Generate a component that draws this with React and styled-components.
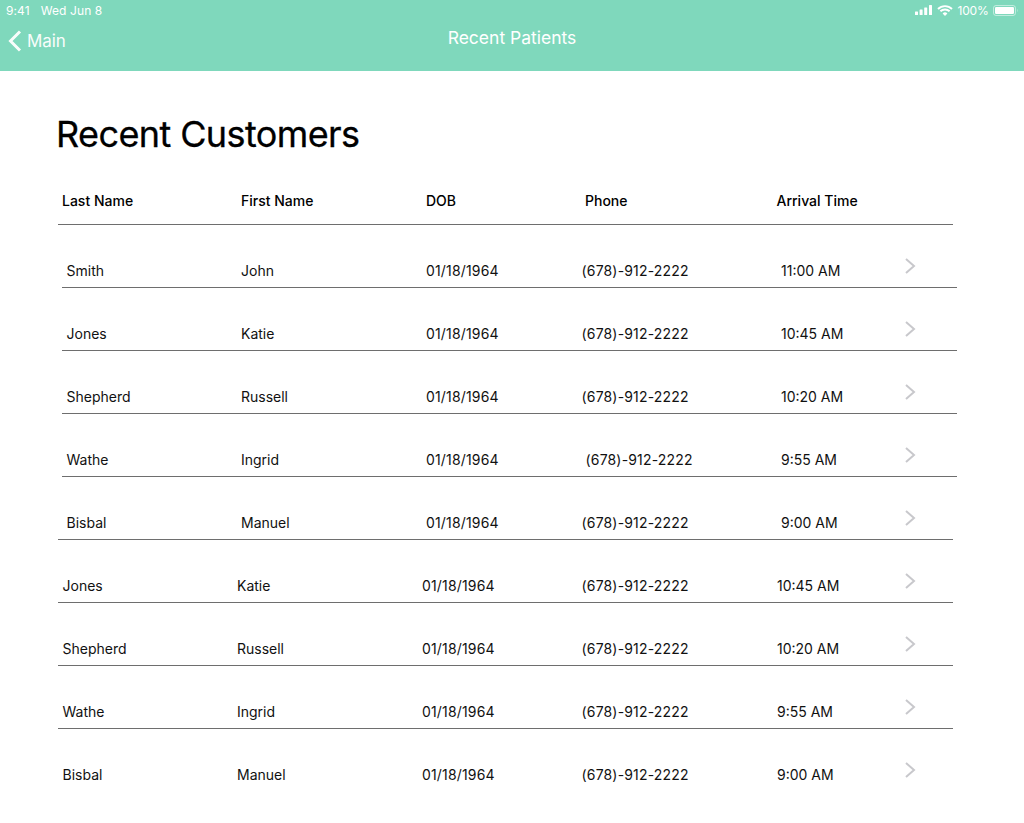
import React from "react";
import styled, { createGlobalStyle } from "styled-components";

const Global = createGlobalStyle`
  html, body { margin: 0; padding: 0; background: #fff; }
  body { font-family: Inter, "Liberation Sans", sans-serif; color: #000; }
`;

const Page = styled.div`
  width: 1024px;
  height: 823px;
  overflow: hidden;
`;
const NavBar = styled.header`
  height: 71px;
  background: #7fd8bc;
  color: #fff;
  display: flex;
  flex-direction: column;
`;
const StatusBar = styled.div`
  height: 20px;
  padding: 0 6px 0 6px;
  display: flex;
  align-items: center;
  justify-content: space-between;
  font-size: 12px;
  letter-spacing: 0.1px;
`;
const StatusGroup = styled.div`
  display: flex;
  align-items: center;
  gap: ${(p) => p.$gap}px;
`;
const Percent = styled.span`
  letter-spacing: -0.2px;
`;
const NavRow = styled.div`
  position: relative;
  height: 37px;
  display: flex;
  align-items: center;
  justify-content: center;
`;
const BackLink = styled.div`
  position: absolute;
  left: 8px;
  top: 10px;
  display: flex;
  align-items: center;
  gap: 5px;
  font-size: 17px;
  letter-spacing: -0.1px;
  opacity: 0.95;
`;
const NavTitle = styled.div`
  font-size: 17.5px;
  font-weight: 400;
  margin-top: -2px;
`;
const Content = styled.main`
  padding: 41px 0 0 56px;
`;
const Title = styled.h1`
  margin: 0;
  font-size: 36px;
  line-height: 44px;
  font-weight: 400;
  letter-spacing: -0.6px;
  -webkit-text-stroke: 0.3px #000;
`;
const Header = styled.div`
  margin: 22px 0 0 2px;
  width: 895px;
  height: 47px;
  box-sizing: border-box;
  border-bottom: 1px solid #6e6e6e;
  display: grid;
  grid-template-columns: ${(p) => p.$cols};
  align-items: center;
  font-size: 14px;
  font-weight: 500;
`;
const HeaderCell = styled.div`
  white-space: nowrap;
  margin-top: -1px;
`;
const Rows = styled.div`
  display: flex;
  flex-direction: column;
`;
const Row = styled.div`
  position: relative;
  margin-left: ${(p) => p.$left}px;
  width: 895px;
  height: 63px;
  box-sizing: border-box;
  border-bottom: ${(p) => (p.$last ? "none" : "1px solid #6e6e6e")};
  padding-top: 37px;
  display: grid;
  grid-template-columns: ${(p) => p.$cols};
  font-size: 14px;
  line-height: 18px;
  color: #111;
`;
const Cell = styled.div`
  white-space: nowrap;
  letter-spacing: ${(p) => (p.$digits ? "0.17px" : "0")};
`;
const Chevron = styled.svg`
  position: absolute;
  left: ${(p) => p.$x}px;
  top: 33px;
`;

const Back = () => (
  <svg width="14" height="22" viewBox="0 0 14 22" fill="none">
    <path d="M12 1.5 L2.5 11 L12 20.5" stroke="#fff" strokeWidth="3" />
  </svg>
);
const Signal = () => (
  <svg width="17" height="10" viewBox="0 0 17 10" fill="#fff">
    <rect x="0" y="6.5" width="3" height="3.5" rx=".5" />
    <rect x="4.6" y="4.5" width="3" height="5.5" rx=".5" />
    <rect x="9.2" y="2.5" width="3" height="7.5" rx=".5" />
    <rect x="14" y="0" width="3" height="10" rx=".5" />
  </svg>
);
const Wifi = () => (
  <svg width="16" height="11" viewBox="0 0 16 11" fill="none" stroke="#fff" strokeWidth="1.9">
    <path d="M1 4 A10 10 0 0 1 15 4" />
    <path d="M3.4 6.3 A6.6 6.6 0 0 1 12.6 6.3" />
    <path d="M8 11 L5.6 8.5 A3.4 3.4 0 0 1 10.4 8.5 Z" fill="#fff" stroke="none" />
  </svg>
);
const Battery = () => (
  <svg width="25" height="11" viewBox="0 0 25 11" fill="none">
    <rect x=".5" y=".5" width="22" height="10" rx="2.5" stroke="#fff" strokeOpacity=".5" />
    <rect x="2" y="2" width="19" height="7" rx="1.2" fill="#fff" />
    <path d="M24 4 C24.8 4.3 24.8 6.7 24 7 Z" fill="#fff" fillOpacity=".5" />
  </svg>
);

const colsOf = (xs, left) => {
  const widths = xs.map((x, i) => (i < xs.length - 1 ? xs[i + 1] - x : 895 - (x - left)));
  return [`${xs[0] - left}px`, ...widths.map((w) => `${w}px`)].join(" ");
};

const rows = [
  { left: 6, xs: [66.5, 241, 426, 581.5, 781], c: ["Smith", "John", "01/18/1964", "(678)-912-2222", "11:00 AM"] },
  { left: 6, xs: [66.5, 241, 426, 581.5, 781], c: ["Jones", "Katie", "01/18/1964", "(678)-912-2222", "10:45 AM"] },
  { left: 6, xs: [66.5, 241, 426, 581.5, 781], c: ["Shepherd", "Russell", "01/18/1964", "(678)-912-2222", "10:20 AM"] },
  { left: 6, xs: [66.5, 241, 426, 585.5, 781], c: ["Wathe", "Ingrid", "01/18/1964", "(678)-912-2222", "9:55 AM"] },
  { left: 2, xs: [66.5, 241, 426, 581.5, 781], c: ["Bisbal", "Manuel", "01/18/1964", "(678)-912-2222", "9:00 AM"] },
  { left: 2, xs: [62.5, 237, 422, 581.5, 777], c: ["Jones", "Katie", "01/18/1964", "(678)-912-2222", "10:45 AM"] },
  { left: 2, xs: [62.5, 237, 422, 581.5, 777], c: ["Shepherd", "Russell", "01/18/1964", "(678)-912-2222", "10:20 AM"] },
  { left: 2, xs: [62.5, 237, 422, 581.5, 777], c: ["Wathe", "Ingrid", "01/18/1964", "(678)-912-2222", "9:55 AM"] },
  { left: 2, xs: [62.5, 237, 422, 581.5, 777], c: ["Bisbal", "Manuel", "01/18/1964", "(678)-912-2222", "9:00 AM"] },
];

const headers = ["Last Name", "First Name", "DOB", "Phone", "Arrival Time"];
const headerXs = [62, 241, 426, 585, 776.5];

export default function App() {
  return (
    <Page>
      <Global />
      <NavBar>
        <StatusBar>
          <StatusGroup $gap={11}>
            <span>9:41</span>
            <span>Wed Jun 8</span>
          </StatusGroup>
          <StatusGroup $gap={4.5}>
            <Signal />
            <Wifi />
            <Percent>100%</Percent>
            <Battery />
          </StatusGroup>
        </StatusBar>
        <NavRow>
          <BackLink>
            <Back />
            <span>Main</span>
          </BackLink>
          <NavTitle>Recent Patients</NavTitle>
        </NavRow>
      </NavBar>
      <Content>
        <Title>Recent Customers</Title>
        <Header $cols={colsOf(headerXs, 58).replace(/^\S+ /, "4px ")}>
          <span />
          {headers.map((h) => (
            <HeaderCell key={h}>{h}</HeaderCell>
          ))}
        </Header>
      </Content>
      <Rows>
        {rows.map((r, i) => {
          const lineLeft = r.left + 56;
          return (
            <Row key={i} $left={lineLeft} $last={i === rows.length - 1} $cols={colsOf(r.xs, lineLeft)}>
              <span />
              {r.c.map((t, j) => (
                <Cell key={j} $digits={j === 2 || j === 3}>{t}</Cell>
              ))}
              <Chevron $x={905 - lineLeft} width="11" height="16" viewBox="0 0 11 16" fill="none">
                <path d="M1 1 L9 8 L1 15" stroke="#c8c8cc" strokeWidth="2" />
              </Chevron>
            </Row>
          );
        })}
      </Rows>
    </Page>
  );
}
